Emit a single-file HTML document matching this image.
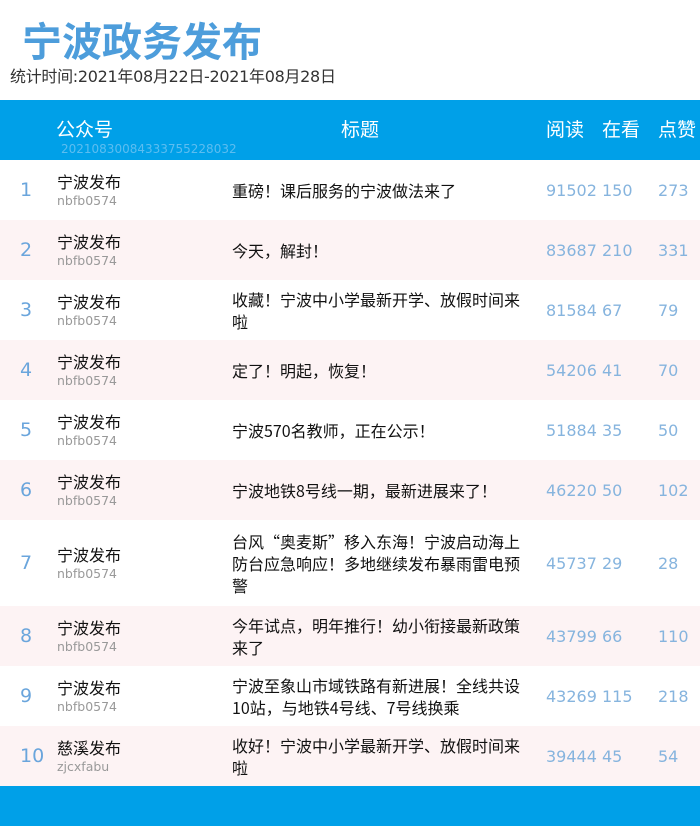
<!DOCTYPE html>
<html><head><meta charset="utf-8"><style>
*{margin:0;padding:0;box-sizing:border-box}
body{width:700px;height:826px;overflow:hidden;background:#fff;font-family:"DejaVu Sans","Noto Sans CJK SC",sans-serif;position:relative}
.t{position:absolute;left:22px;top:10px;font-size:40px;font-weight:bold;color:#4d9ddb;font-family:"Noto Sans CJK SC",sans-serif;letter-spacing:0px}
.s{position:absolute;left:10px;top:63px;font-size:16px;color:#333;font-family:"DejaVu Sans","Noto Sans CJK SC",sans-serif;letter-spacing:-0.3px}
.hd{position:absolute;left:0;top:100px;width:700px;height:60px;background:#00a0e8;color:#fff;font-size:19px}
.hd span{position:absolute;top:15px;font-family:"Noto Sans CJK SC",sans-serif}
.hd .code{top:42px;left:61px;font-size:12px;color:#5cbdf0;font-family:"DejaVu Sans",sans-serif}
.r{position:absolute;left:0;width:700px;display:flex;align-items:center}
.r.p{background:#fdf3f4}
.rk{position:absolute;left:20px;font-size:19px;color:#6aa5dc}
.nm{position:absolute;left:57px;}
.nm b{display:block;font-weight:normal;font-size:16px;color:#111;line-height:22px;font-family:"Noto Sans CJK SC",sans-serif}
.nm i{display:block;font-style:normal;font-size:12.5px;color:#999;line-height:18px}
.ti{position:absolute;left:232px;width:292px;font-size:16px;line-height:22px;color:#111;font-family:"Noto Sans CJK SC",sans-serif}
.n{position:absolute;font-size:16px;color:#86b4de}
.ft{position:absolute;left:0;top:786px;width:700px;height:40px;background:#00a0e8}
</style></head><body>
<div class="t">宁波政务发布</div>
<div class="s">统计时间:2021年08月22日-2021年08月28日</div>
<div class="hd"><span style="left:56px">公众号</span><span style="left:341px">标题</span><span style="left:546px">阅读</span><span style="left:602px">在看</span><span style="left:658px">点赞</span><span class="code">20210830084333755228032</span></div>

<div class="r" style="top:160px;height:60px"><div class="rk">1</div><div class="nm"><b>宁波发布</b><i>nbfb0574</i></div><div class="ti">重磅！课后服务的宁波做法来了</div><div class="n" style="left:546px">91502</div><div class="n" style="left:602px">150</div><div class="n" style="left:658px">273</div></div>
<div class="r p" style="top:220px;height:60px"><div class="rk">2</div><div class="nm"><b>宁波发布</b><i>nbfb0574</i></div><div class="ti">今天，解封！</div><div class="n" style="left:546px">83687</div><div class="n" style="left:602px">210</div><div class="n" style="left:658px">331</div></div>
<div class="r" style="top:280px;height:60px"><div class="rk">3</div><div class="nm"><b>宁波发布</b><i>nbfb0574</i></div><div class="ti">收藏！宁波中小学最新开学、放假时间来啦</div><div class="n" style="left:546px">81584</div><div class="n" style="left:602px">67</div><div class="n" style="left:658px">79</div></div>
<div class="r p" style="top:340px;height:60px"><div class="rk">4</div><div class="nm"><b>宁波发布</b><i>nbfb0574</i></div><div class="ti">定了！明起，恢复！</div><div class="n" style="left:546px">54206</div><div class="n" style="left:602px">41</div><div class="n" style="left:658px">70</div></div>
<div class="r" style="top:400px;height:60px"><div class="rk">5</div><div class="nm"><b>宁波发布</b><i>nbfb0574</i></div><div class="ti">宁波570名教师，正在公示！</div><div class="n" style="left:546px">51884</div><div class="n" style="left:602px">35</div><div class="n" style="left:658px">50</div></div>
<div class="r p" style="top:460px;height:60px"><div class="rk">6</div><div class="nm"><b>宁波发布</b><i>nbfb0574</i></div><div class="ti">宁波地铁8号线一期，最新进展来了！</div><div class="n" style="left:546px">46220</div><div class="n" style="left:602px">50</div><div class="n" style="left:658px">102</div></div>
<div class="r" style="top:520px;height:86px"><div class="rk">7</div><div class="nm"><b>宁波发布</b><i>nbfb0574</i></div><div class="ti">台风“奥麦斯”移入东海！宁波启动海上<br>防台应急响应！多地继续发布暴雨雷电预<br>警</div><div class="n" style="left:546px">45737</div><div class="n" style="left:602px">29</div><div class="n" style="left:658px">28</div></div>
<div class="r p" style="top:606px;height:60px"><div class="rk">8</div><div class="nm"><b>宁波发布</b><i>nbfb0574</i></div><div class="ti">今年试点，明年推行！幼小衔接最新政策<br>来了</div><div class="n" style="left:546px">43799</div><div class="n" style="left:602px">66</div><div class="n" style="left:658px">110</div></div>
<div class="r" style="top:666px;height:60px"><div class="rk">9</div><div class="nm"><b>宁波发布</b><i>nbfb0574</i></div><div class="ti">宁波至象山市域铁路有新进展！全线共设<br>10站，与地铁4号线、7号线换乘</div><div class="n" style="left:546px">43269</div><div class="n" style="left:602px">115</div><div class="n" style="left:658px">218</div></div>
<div class="r p" style="top:726px;height:60px"><div class="rk">10</div><div class="nm"><b>慈溪发布</b><i>zjcxfabu</i></div><div class="ti">收好！宁波中小学最新开学、放假时间来<br>啦</div><div class="n" style="left:546px">39444</div><div class="n" style="left:602px">45</div><div class="n" style="left:658px">54</div></div>
<div class="ft"></div>
</body></html>
